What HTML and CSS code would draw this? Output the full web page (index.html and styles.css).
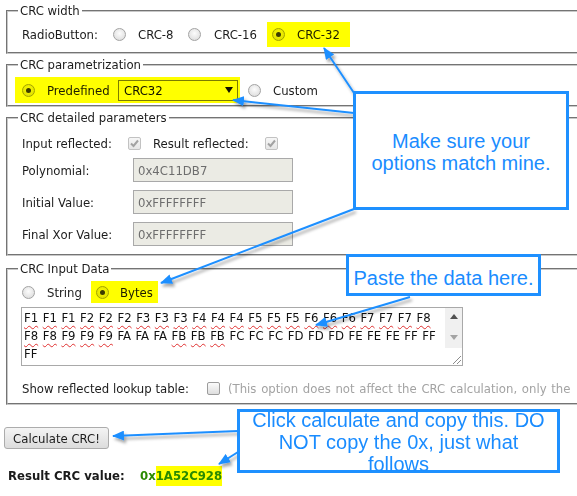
FILE: index.html
```html
<!DOCTYPE html>
<html>
<head>
<meta charset="utf-8">
<title>CRC</title>
<link rel="stylesheet" href="styles.css">
</head>
<body>
<div class="page">
  <fieldset class="fs fs1">
    <legend>CRC width</legend>
    <div class="fb">
      <div class="row h24">
        <span class="w-rb">RadioButton:</span>
        <span class="radio"></span><span class="opt w-c8">CRC-8</span>
        <span class="radio"></span><span class="opt w-c16">CRC-16</span>
        <span class="hl hl32"><span class="radio on"></span><span class="opt">CRC-32</span></span>
      </div>
    </div>
  </fieldset>

  <fieldset class="fs fs2">
    <legend>CRC parametrization</legend>
    <div class="fb">
      <div class="row h26">
        <span class="hl hlpre">
          <span class="radio on"></span><span class="opt w-pre">Predefined</span>
          <span class="sel"><span>CRC32</span><svg class="sel-arrow" width="8" height="6" viewBox="0 0 8 6"><path d="M0 0H8L4 6Z" fill="#111"/></svg></span>
        </span>
        <span class="radio m-cus"></span><span class="opt">Custom</span>
      </div>
    </div>
  </fieldset>

  <fieldset class="fs fs3">
    <legend>CRC detailed parameters</legend>
    <div class="fb">
      <div class="row h24">
        <span class="w-ir">Input reflected:</span>
        <span class="cb"><svg width="11" height="11" viewBox="0 0 11 11"><path d="M2 5.5L4.5 8L9 2.5" fill="none" stroke="#a2a2a2" stroke-width="2"/></svg></span>
        <span class="w-rr">Result reflected:</span>
        <span class="cb"><svg width="11" height="11" viewBox="0 0 11 11"><path d="M2 5.5L4.5 8L9 2.5" fill="none" stroke="#a2a2a2" stroke-width="2"/></svg></span>
      </div>
      <div class="row h24 prow p1">
        <span class="plbl">Polynomial:</span><span class="inp">0x4C11DB7</span>
      </div>
      <div class="row h24 prow">
        <span class="plbl">Initial Value:</span><span class="inp">0xFFFFFFFF</span>
      </div>
      <div class="row h24 prow">
        <span class="plbl">Final Xor Value:</span><span class="inp">0xFFFFFFFF</span>
      </div>
    </div>
  </fieldset>

  <fieldset class="fs fs4">
    <legend>CRC Input Data</legend>
    <div class="fb">
      <div class="row h22">
        <span class="radio"></span><span class="opt w-str">String</span>
        <span class="hl hlby"><span class="radio on"></span><span class="opt m-by">Bytes</span></span>
      </div>
      <div class="ta">
        <div class="ta-text">
          <div><span class="sp">F1</span> <span class="sp">F1</span> <span class="sp">F1</span> <span class="sp">F2</span> <span class="sp">F2</span> <span class="sp">F2</span> <span class="sp">F3</span> <span class="sp">F3</span> <span class="sp">F3</span> <span class="sp">F4</span> <span class="sp">F4</span> <span class="sp">F4</span> <span class="sp">F5</span> <span class="sp">F5</span> <span class="sp">F5</span> <span class="sp">F6</span> <span class="sp">F6</span> <span class="sp">F6</span> <span class="sp">F7</span> <span class="sp">F7</span> <span class="sp">F7</span> <span class="sp">F8</span></div>
          <div><span class="sp">F8</span> <span class="sp">F8</span> <span class="sp">F9</span> <span class="sp">F9</span> <span class="sp">F9</span> FA FA FA <span class="sp">FB</span> <span class="sp">FB</span> <span class="sp">FB</span> FC FC FC FD FD FD FE FE FE FF FF</div>
          <div>FF</div>
        </div>
        <div class="sb">
          <div class="sb-btn"><svg width="8" height="5" viewBox="0 0 8 5"><path d="M0 5L4 0L8 5Z" fill="#505050"/></svg></div>
          <div class="sb-gap"></div>
          <div class="sb-btn"><svg width="8" height="5" viewBox="0 0 8 5"><path d="M0 0H8L4 5Z" fill="#a3a3a3"/></svg></div>
          <div class="sb-fill"></div>
          <div class="sb-corner"><svg width="12" height="12" viewBox="0 0 12 12"><path d="M11 3L3 11M11 7L7 11" stroke="#8c8c8c" stroke-width="1"/></svg></div>
        </div>
      </div>
      <div class="row h22 showrow">
        <span class="w-show">Show reflected lookup table:</span>
        <span class="cb en"></span>
        <span class="note">(This option does not affect the CRC calculation, only the</span>
      </div>
    </div>
  </fieldset>

  <div class="btnrow"><button class="btn" type="button">Calculate CRC!</button></div>

  <div class="res">
    <span class="res-l">Result CRC value:</span>
    <span class="res-v">0x</span><span class="hl res-v">1A52C928</span>
  </div>

  <svg class="arrows" width="577" height="496" viewBox="0 0 577 496">
    <defs>
      <marker id="ah" markerUnits="userSpaceOnUse" markerWidth="12" markerHeight="10" viewBox="0 0 12 10" refX="11" refY="5" orient="auto">
        <path d="M0 0L12 5L0 10Z" fill="#1e8fff"/>
      </marker>
      <filter id="sh" filterUnits="userSpaceOnUse" x="0" y="0" width="577" height="496">
        <feDropShadow dx="2" dy="3" stdDeviation="1.5" flood-color="#000" flood-opacity="0.35"/>
      </filter>
    </defs>
    <g stroke="#1e8fff" stroke-width="2" fill="none" filter="url(#sh)">
      <line x1="354" y1="93" x2="324" y2="48" marker-end="url(#ah)"/>
      <line x1="354" y1="113" x2="233" y2="100" marker-end="url(#ah)"/>
      <line x1="354" y1="209" x2="161" y2="283" marker-end="url(#ah)"/>
      <line x1="410" y1="297" x2="316" y2="325" marker-end="url(#ah)"/>
      <line x1="238" y1="431" x2="113" y2="436" marker-end="url(#ah)"/>
      <line x1="238" y1="452" x2="219" y2="464" marker-end="url(#ah)"/>
    </g>
  </svg>

  <div class="co co1">Make sure your<br>options match mine.</div>
  <div class="co co2">Paste the data here.</div>
  <div class="co co3"><div class="co3-t">Click calculate and copy this. DO<br>NOT copy the 0x, just what<br>follows</div></div>
</div>
</body>
</html>
```

FILE: styles.css
```css
html, body {
  margin: 0;
  padding: 0;
  background: #fff;
  overflow: hidden;
}
body {
  font-family: "DejaVu Sans Condensed", "DejaVu Sans", sans-serif;
  font-stretch: condensed;
  font-size: 13px;
  color: #1c1c1c;
}
.page {
  position: relative;
  width: 577px;
  height: 496px;
  box-sizing: border-box;
  padding: 3px 0 0 4px;
  overflow: hidden;
}
.fs {
  width: 640px;
  box-sizing: border-box;
  margin: 3px 0 0 2px;
  padding: 0;
  min-width: 0;
  border: 2px groove #c8c8c8;
}
.fs1 { margin-top: 0; }
.fs4 { margin-top: 5px; }
legend {
  padding: 0 2px;
  margin-left: 10px;
  line-height: 16px;
  font-size: 13px;
  color: #1c1c1c;
}
.fs1 .fb { padding: 3px 0 6px 14px; }
.fs2 .fb { padding: 4px 0 2px 14px; }
.fs3 .fb { padding: 5px 0 8px 14px; }
.fs4 .fb { padding: 4px 0 4px 14px; }

.row {
  display: flex;
  align-items: center;
  white-space: nowrap;
}
.row > * { flex: none; }
.h22 { height: 22px; }
.h24 { height: 24px; }
.h26 { height: 26px; }

.opt { margin-left: 12px; }
.w-rb { width: 91px; }
.w-c8 { width: 50px; margin-left: 12px; }
.w-c16 { width: 53px; margin-left: 13px; }
.w-pre { width: 71px; }
.w-str { width: 44px; }
.m-cus { margin-left: 8px; }
.m-by { margin-left: 11px; }

.radio {
  flex: none;
  position: relative;
  width: 13px;
  height: 13px;
  box-sizing: border-box;
  border-radius: 50%;
  border: 1px solid #a3a3a3;
  background: radial-gradient(circle at 50% 40%, #fcfcfc 0%, #e6e6e6 60%, #d6d6d6 100%);
}
.radio.on::after {
  content: "";
  position: absolute;
  left: 3px;
  top: 3px;
  width: 5px;
  height: 5px;
  border-radius: 50%;
  background: #3c3c3c;
}

.hl {
  position: relative;
  display: flex;
  align-items: center;
}
.hl > * { flex: none; }
.hl::after {
  content: "";
  position: absolute;
  left: 0;
  top: 0;
  right: 0;
  bottom: 0;
  background: #ffff00;
  mix-blend-mode: multiply;
  pointer-events: none;
}
.hl32 {
  height: 25px;
  padding: 0 10px 0 5px;
}
.hlpre {
  height: 26px;
  margin-left: -7px;
  padding: 0 2px 0 7px;
}
.hlby {
  height: 22px;
  padding: 0 5px 0 5px;
}

.sel {
  width: 120px;
  height: 21px;
  box-sizing: border-box;
  border: 1px solid #7c7c7c;
  background: #fff;
  display: flex;
  align-items: center;
  justify-content: space-between;
  padding: 0 4px 0 5px;
  color: #111;
}

.cb {
  flex: none;
  width: 13px;
  height: 13px;
  box-sizing: border-box;
  border: 1px solid #c2c2c2;
  border-radius: 2px;
  background: linear-gradient(#f6f6f6, #e6e6e6);
  display: flex;
  align-items: center;
  justify-content: center;
}
.cb.en {
  border-color: #9c9c9c;
  background: linear-gradient(#fbfbfb, #dedede);
}
.w-ir { width: 106px; }
.w-rr { width: 112px; margin-left: 12px; }

.prow { margin-top: 8px; }
.prow.p1 { margin-top: 3px; }
.plbl { width: 111px; }
.inp {
  width: 160px;
  height: 24px;
  box-sizing: border-box;
  border: 1px solid #a9a9a9;
  background: #ebebe4;
  color: #6d6d6d;
  padding-left: 4px;
  display: flex;
  align-items: center;
}

.ta {
  margin: 4px 0 0 -1px;
  width: 442px;
  height: 59px;
  box-sizing: border-box;
  border: 1px solid #a9a9a9;
  background: #fff;
  display: flex;
}
.ta-text {
  flex: 1;
  padding: 1px 2px;
  line-height: 18px;
  color: #111;
  white-space: nowrap;
  overflow: hidden;
  word-spacing: 0.8px;
}
.sp {
  text-decoration: underline wavy #e03030;
  text-decoration-thickness: 1px;
  text-underline-offset: 3px;
  text-decoration-skip-ink: none;
}
.sb {
  flex: none;
  width: 17px;
  display: flex;
  flex-direction: column;
  background: #f0f0f0;
}
.sb-btn {
  height: 17px;
  display: flex;
  align-items: center;
  justify-content: center;
}
.sb-gap { height: 4px; }
.sb-fill { flex: 1; }
.sb-corner {
  height: 17px;
  background: #fff;
  display: flex;
  align-items: flex-end;
  justify-content: flex-end;
}

.showrow { margin-top: 11px; }
.w-show { width: 185px; }
.note { margin-left: 8px; color: #a3a3a3; word-spacing: 1px; }

.btnrow { margin-top: 22px; }
.btn {
  display: block;
  width: 105px;
  height: 22px;
  box-sizing: border-box;
  padding: 0;
  border: 1px solid #acacac;
  border-radius: 3px;
  background: linear-gradient(#f4f4f4, #dcdcdc);
  font-family: "DejaVu Sans Condensed", "DejaVu Sans", sans-serif;
  font-stretch: condensed;
  font-size: 13px;
  color: #1c1c1c;
}

.res {
  margin-top: 17px;
  padding-left: 4px;
  display: flex;
  line-height: 20px;
  font-weight: bold;
  white-space: nowrap;
}
.res > * { flex: none; }
.res-l { width: 132px; color: #1a1a1a; }
.res-v { color: #2a8a00; }

.arrows {
  position: absolute;
  left: 0;
  top: 0;
  pointer-events: none;
}

.co {
  position: absolute;
  box-sizing: border-box;
  border: 3px solid #1e90ff;
  background: #fff;
  color: #1a8cff;
  font-family: "Liberation Sans", Arial, sans-serif;
  font-size: 20px;
  line-height: 22px;
  text-align: center;
}
.co1 { left: 353px; top: 91px; width: 216px; height: 119px; padding-top: 36px; }
.co2 { left: 346px; top: 254px; width: 195px; height: 42px; padding-top: 10px; }
.co3 { left: 237px; top: 409px; width: 323px; height: 64px; }
.co3-t { margin-top: -3px; }
```
